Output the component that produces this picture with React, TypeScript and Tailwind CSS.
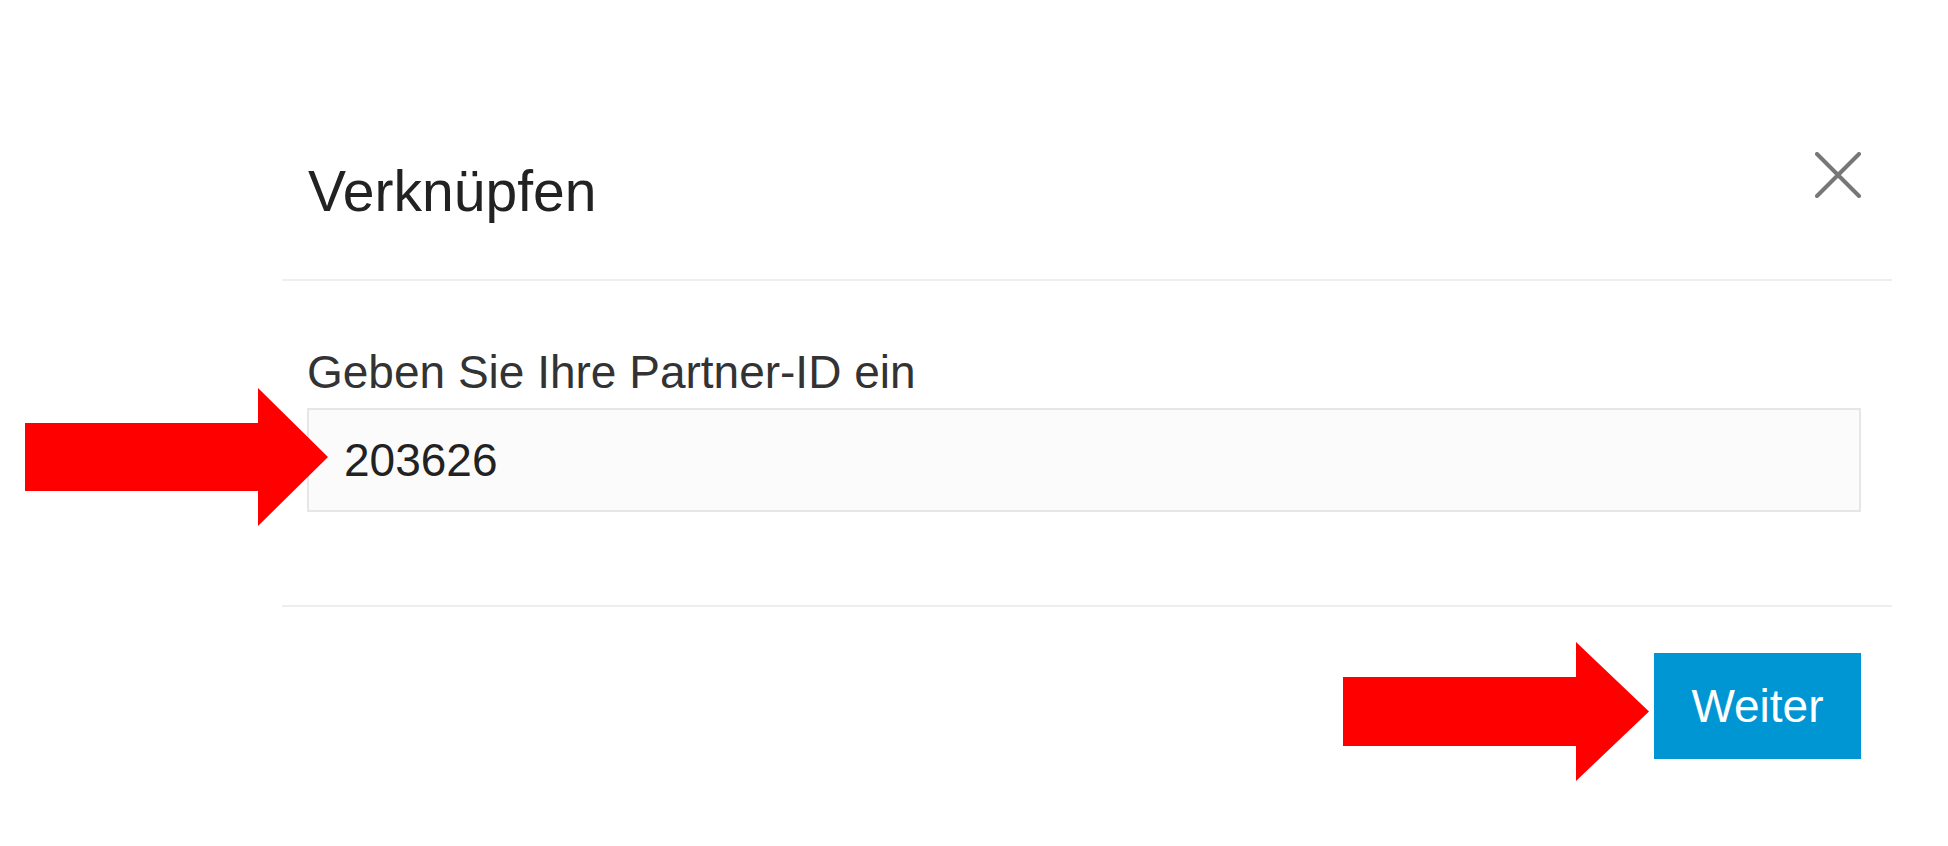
const font = { fontFamily: '"Liberation Sans", Arial, sans-serif' };

function Arrow({ w, h, shaftEnd, shaftTop, shaftBottom }: { w: number; h: number; shaftEnd: number; shaftTop: number; shaftBottom: number }) {
  const mid = h / 2;
  return (
    <svg width={w} height={h} viewBox={`0 0 ${w} ${h}`}>
      <polygon
        points={`0,${shaftTop} ${shaftEnd},${shaftTop} ${shaftEnd},0 ${w},${mid} ${shaftEnd},${h} ${shaftEnd},${shaftBottom} 0,${shaftBottom}`}
        fill="#ff0000"
      />
    </svg>
  );
}

export default function App() {
  return (
    <div className="relative w-full h-[846px] bg-white overflow-hidden" style={font}>
      <div className="ml-[282px] w-[1610px]">

        {/* header */}
        <div className="h-[281px] box-border border-b-2 border-[#eeeeee] flex justify-between items-start pt-[152px] pl-[26px] pr-[31px]">
          <h2 className="mt-[11px] text-[57px] leading-none font-normal text-[#222222]">
            Verknüpfen
          </h2>
          <button className="w-[46px] h-[46px]" aria-label="Schließen">
            <svg width="46" height="46" viewBox="0 0 46 46">
              <path d="M2 2 L44 44 M44 2 L2 44" stroke="#777777" strokeWidth="4" strokeLinecap="round" />
            </svg>
          </button>
        </div>

        {/* body */}
        <div className="h-[326px] box-border border-b-2 border-[#eeeeee] pt-[68px] pl-[25px] pr-[31px]">
          <label className="block text-[46px] leading-none text-[#333333]">
            Geben Sie Ihre Partner-ID ein
          </label>
          <input
            readOnly
            defaultValue="203626"
            className="mt-[13px] block w-full h-[104px] box-border border-2 border-[#e6e6e6] bg-[#fbfbfb] pl-[35px] text-[46px] text-[#222222] outline-none"
            style={font}
          />
        </div>

        {/* footer */}
        <div className="flex justify-end pt-[46px] pr-[31px]">
          <button className="w-[207px] h-[106px] bg-[#0096d3] text-white text-[46px] leading-none">
            Weiter
          </button>
        </div>

      </div>

      {/* annotation arrows */}
      <div className="absolute left-[25px] top-[388px]">
        <Arrow w={303} h={138} shaftEnd={233} shaftTop={35} shaftBottom={103} />
      </div>
      <div className="absolute left-[1343px] top-[642px]">
        <Arrow w={306} h={139} shaftEnd={233} shaftTop={35} shaftBottom={104} />
      </div>
    </div>
  );
}
